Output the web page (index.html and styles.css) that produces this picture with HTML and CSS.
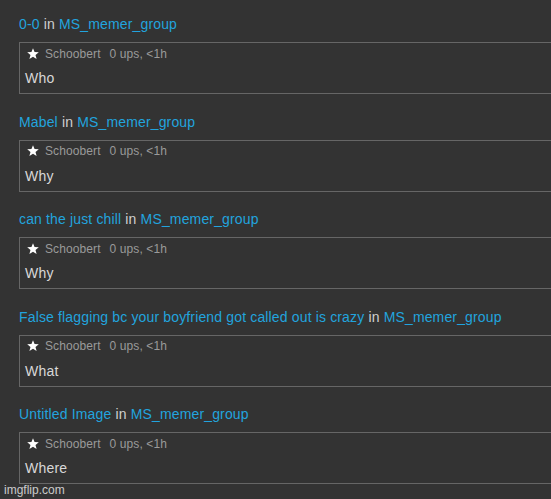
FILE: index.html
```html
<!DOCTYPE html>
<html>
<head>
<meta charset="utf-8">
<link rel="stylesheet" href="styles.css">
</head>
<body>
<div class="feed">
  <div class="item">
    <div class="title"><a class="link">0-0</a> in <a class="link">MS_memer_group</a></div>
    <div class="box">
      <div class="meta"><svg class="star" viewBox="0 0 12 12"><path d="M6 0.2 L7.55 4.0 L11.8 4.25 L8.5 6.9 L9.6 11.1 L6 8.7 L2.4 11.1 L3.5 6.9 L0.2 4.25 L4.45 4.0 Z" fill="#fff"/></svg><span class="user">Schoobert</span><span class="info">0 ups, &lt;1h</span></div>
      <div class="text">Who</div>
    </div>
  </div>
  <div class="item">
    <div class="title"><a class="link">Mabel</a> in <a class="link">MS_memer_group</a></div>
    <div class="box">
      <div class="meta"><svg class="star" viewBox="0 0 12 12"><path d="M6 0.2 L7.55 4.0 L11.8 4.25 L8.5 6.9 L9.6 11.1 L6 8.7 L2.4 11.1 L3.5 6.9 L0.2 4.25 L4.45 4.0 Z" fill="#fff"/></svg><span class="user">Schoobert</span><span class="info">0 ups, &lt;1h</span></div>
      <div class="text">Why</div>
    </div>
  </div>
  <div class="item">
    <div class="title"><a class="link">can the just chill</a> in <a class="link">MS_memer_group</a></div>
    <div class="box">
      <div class="meta"><svg class="star" viewBox="0 0 12 12"><path d="M6 0.2 L7.55 4.0 L11.8 4.25 L8.5 6.9 L9.6 11.1 L6 8.7 L2.4 11.1 L3.5 6.9 L0.2 4.25 L4.45 4.0 Z" fill="#fff"/></svg><span class="user">Schoobert</span><span class="info">0 ups, &lt;1h</span></div>
      <div class="text">Why</div>
    </div>
  </div>
  <div class="item">
    <div class="title"><a class="link">False flagging bc your boyfriend got called out is crazy</a> in <a class="link">MS_memer_group</a></div>
    <div class="box">
      <div class="meta"><svg class="star" viewBox="0 0 12 12"><path d="M6 0.2 L7.55 4.0 L11.8 4.25 L8.5 6.9 L9.6 11.1 L6 8.7 L2.4 11.1 L3.5 6.9 L0.2 4.25 L4.45 4.0 Z" fill="#fff"/></svg><span class="user">Schoobert</span><span class="info">0 ups, &lt;1h</span></div>
      <div class="text">What</div>
    </div>
  </div>
  <div class="item">
    <div class="title"><a class="link">Untitled Image</a> in <a class="link">MS_memer_group</a></div>
    <div class="box">
      <div class="meta"><svg class="star" viewBox="0 0 12 12"><path d="M6 0.2 L7.55 4.0 L11.8 4.25 L8.5 6.9 L9.6 11.1 L6 8.7 L2.4 11.1 L3.5 6.9 L0.2 4.25 L4.45 4.0 Z" fill="#fff"/></svg><span class="user">Schoobert</span><span class="info">0 ups, &lt;1h</span></div>
      <div class="text">Where</div>
    </div>
  </div>
</div>
<div class="watermark">imgflip.com</div>
</body>
</html>
```

FILE: styles.css
```css
html, body {
  margin: 0;
  padding: 0;
  background: #333333;
  overflow: hidden;
  height: 100%;
}
body {
  font-family: "Liberation Sans", Arial, sans-serif;
  position: relative;
}
.feed {
  padding: 15px 0 0 19px;
}
.item {
  margin-bottom: 18.5px;
}
.title {
  font-size: 14px;
  line-height: 18px;
  letter-spacing: 0.15px;
  color: #d0d0d0;
  white-space: nowrap;
  overflow: hidden;
  margin-bottom: 9px;
}
.link {
  color: #22a4de;
  text-decoration: none;
}
.box {
  border: 1px solid #666;
  border-right: 0;
  padding: 3px 0 6px 0;
}
.meta {
  display: flex;
  align-items: center;
  height: 15px;
  padding-left: 7px;
  font-size: 12px;
  letter-spacing: 0.1px;
  color: #9a9a9a;
}
.star {
  width: 12px;
  height: 12px;
  margin-right: 6px;
}
.user {
  margin-right: 9px;
}
.text {
  margin-top: 8px;
  padding-left: 5px;
  font-size: 14px;
  line-height: 18px;
  letter-spacing: 0.2px;
  color: #d8d8d8;
}
.watermark {
  position: absolute;
  left: 4px;
  top: 482px;
  font-size: 12px;
  line-height: 16px;
  color: rgba(255,255,255,0.75);
}
```
